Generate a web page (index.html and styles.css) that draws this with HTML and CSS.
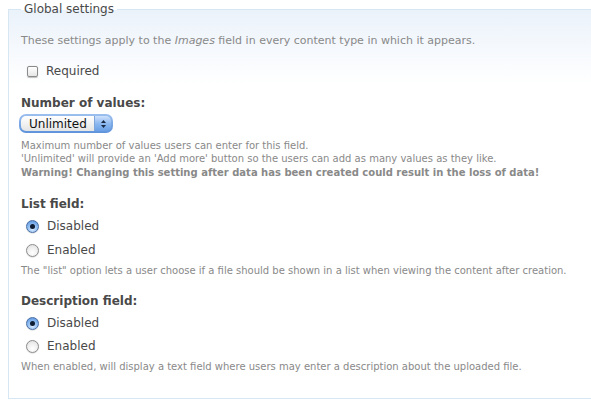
FILE: index.html
```html
<!DOCTYPE html>
<html lang="en">
<head>
<meta charset="utf-8">
<title>Global settings</title>
<link rel="stylesheet" href="styles.css">
</head>
<body>
<fieldset class="settings">
  <legend class="settings-legend">Global settings</legend>
  <p class="intro">These settings apply to the <em>Images</em> field in every content type in which it appears.</p>

  <label class="option option-check"><span class="checkbox"></span>Required</label>

  <div class="form-item first-item">
    <div class="field-label">Number of values:</div>
    <div class="select-wrap">
      <div class="select"><span class="select-text">Unlimited</span><span class="select-arrows"><svg width="7" height="10" viewBox="0 0 7 10"><path d="M3.5 1 L6 4 L1 4 Z" fill="#1a2a44"/><path d="M3.5 9 L6 6 L1 6 Z" fill="#1a2a44"/></svg></span></div>
    </div>
    <div class="description">Maximum number of values users can enter for this field.<br>'Unlimited' will provide an 'Add more' button so the users can add as many values as they like.<br><strong>Warning! Changing this setting after data has been created could result in the loss of data!</strong></div>
  </div>

  <div class="form-item">
    <div class="field-label">List field:</div>
    <label class="option option-radio"><span class="radio checked"></span>Disabled</label>
    <label class="option option-radio second"><span class="radio"></span>Enabled</label>
    <div class="description short">The "list" option lets a user choose if a file should be shown in a list when viewing the content after creation.</div>
  </div>

  <div class="form-item last-item">
    <div class="field-label">Description field:</div>
    <label class="option option-radio"><span class="radio checked"></span>Disabled</label>
    <label class="option option-radio second tight"><span class="radio"></span>Enabled</label>
    <div class="description short">When enabled, will display a text field where users may enter a description about the uploaded file.</div>
  </div>
</fieldset>
</body>
</html>
```

FILE: styles.css
```css
html, body {
  margin: 0;
  padding: 0;
  overflow: hidden;
  background: #ffffff;
}

body {
  font-family: "DejaVu Sans", Verdana, sans-serif;
  color: #494949;
  font-size: 12px;
  width: 591px;
  height: 407px;
}

.settings {
  box-sizing: border-box;
  margin: 0 0 0 8px;
  width: 583px;
  height: 399px;
  padding: 0 12px;
  border: 1px solid #d6e6f2;
  border-right: 0;
  background: linear-gradient(to bottom, #eaf2fa 0px, #f6f9fd 40px, #ffffff 75px);
}

.settings-legend {
  padding: 1px 3px 0 3px;
  font-size: 12px;
  line-height: 17px;
  color: #494949;
}

.intro {
  margin: 16px 0 0 0;
  font-size: 11px;
  line-height: 14px;
  color: #898989;
}

.intro em {
  font-style: italic;
}

.option {
  display: flex;
  align-items: center;
  font-size: 12px;
  line-height: 18px;
  color: #494949;
}

.option-check {
  margin-top: 14px;
  padding-left: 6px;
}

.checkbox {
  box-sizing: border-box;
  width: 11px;
  height: 11px;
  margin-right: 8px;
  border: 1px solid #8a8a8a;
  border-radius: 2px;
  background: linear-gradient(to bottom, #ffffff, #e6e6e6);
  box-shadow: 0 0.5px 1px rgba(0,0,0,0.25);
}

.form-item {
  margin-top: 16px;
}

.first-item {
  margin-top: 14px;
}

.last-item {
  margin-top: 14.5px;
}

.field-label {
  font-weight: bold;
  font-size: 12px;
  line-height: 18px;
  color: #494949;
}

.select-wrap {
  margin-top: 2px;
  margin-left: -2px;
  display: flex;
}

.select {
  box-sizing: border-box;
  width: 94px;
  height: 19px;
  padding: 2px;
  border-radius: 7px;
  background: linear-gradient(to bottom, #9cc0ef, #5e93db);
  display: flex;
}

.select-text {
  flex: 1;
  display: flex;
  align-items: center;
  padding-left: 8px;
  font-size: 12px;
  color: #111111;
  background: linear-gradient(to bottom, #ffffff 0%, #f2f2f2 50%, #e4e4e4 100%);
  border-radius: 5px 0 0 5px;
}

.select-arrows {
  width: 16px;
  display: flex;
  align-items: center;
  justify-content: center;
  border-radius: 0 5px 5px 0;
  background: linear-gradient(to bottom, #cfe2fb 0%, #8db8f0 50%, #6aa0e6 100%);
  border-left: 1px solid #7ea6d8;
}

.description {
  margin-top: 5.5px;
  font-size: 10px;
  line-height: 13.5px;
  color: #898989;
}

.description strong {
  font-weight: bold;
}

.description.short {
  margin-top: 5px;
}

.option-radio {
  margin-top: 4px;
  padding-left: 5px;
}

.option-radio.second {
  margin-top: 6px;
}

.option-radio.tight {
  margin-top: 5px;
}

.radio {
  box-sizing: border-box;
  width: 13px;
  height: 13px;
  margin-right: 8px;
  border-radius: 50%;
  border: 1px solid #8c8c8c;
  background: radial-gradient(circle at 50% 70%, #ffffff 0%, #f0f0f0 50%, #dcdcdc 100%);
  box-shadow: 0 0.5px 1px rgba(0,0,0,0.2);
  position: relative;
}

.radio.checked {
  border-color: #4a6fa5;
  background: radial-gradient(circle at 50% 75%, #d8eafe 0%, #8ebcf2 50%, #4f8ad8 100%);
}

.radio.checked::after {
  content: "";
  position: absolute;
  left: 3px;
  top: 3px;
  width: 5px;
  height: 5px;
  border-radius: 50%;
  background: #0f1d33;
}
```
